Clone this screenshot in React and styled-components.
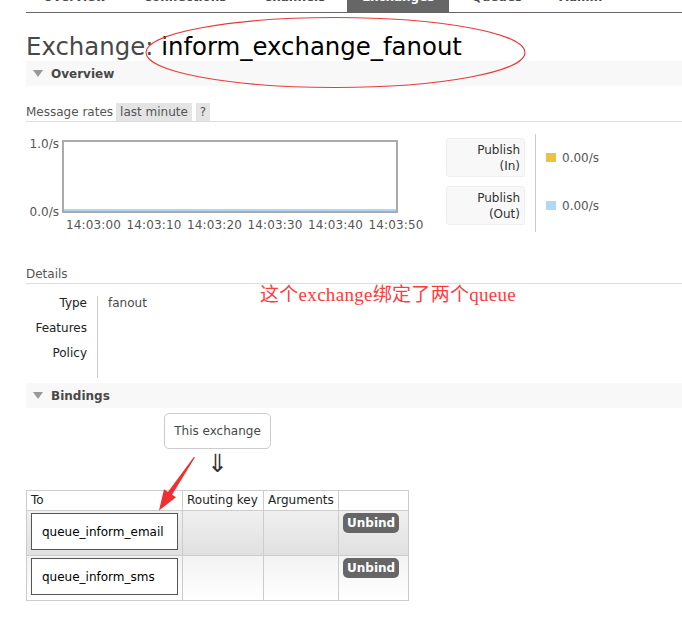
import React from "react";
import styled, { createGlobalStyle } from "styled-components";

const GlobalStyle = createGlobalStyle`
  html, body { margin: 0; padding: 0; background: #fff; }
  body {
    font-family: "DejaVu Sans", Verdana, sans-serif;
    font-size: 12px;
    color: #484848;
  }
  * { box-sizing: border-box; }
`;

const Page = styled.div`
  position: relative;
  width: 682px;
  height: 617px;
  overflow: hidden;
  padding-left: 26px;
`;

/* ---------- nav ---------- */
const NavClip = styled.div`
  height: 13px;
  border-bottom: 1px solid #666;
  overflow: hidden;
`;
const NavList = styled.ul`
  display: flex;
  gap: 7px;
  margin: -14px 0 0 2px;
  padding: 0;
  list-style: none;
`;
const Tab = styled.li`
  height: 26px;
  padding: 4px 15px 0;
  line-height: 14px;
  font-weight: bold;
  white-space: nowrap;
  color: ${(p) => (p.$active ? "#fff" : "#484848")};
  background: ${(p) => (p.$active ? "#666" : "transparent")};
`;

/* ---------- title ---------- */
const Title = styled.h1`
  margin: 20px 0 0;
  font-size: 24.4px;
  font-weight: normal;
  line-height: 28px;
  color: #484848;
  white-space: nowrap;
`;
const TitleName = styled.span`
  color: #000;
`;

/* ---------- section header ---------- */
const SectionHeader = styled.h2`
  margin: ${(p) => p.$mt || 0}px 0 0;
  height: 25px;
  display: flex;
  align-items: center;
  gap: 8px;
  padding-left: 7px;
  background: #f8f8f8;
  font-size: 12px;
  font-weight: bold;
  color: #484848;
`;
const Triangle = () => (
  <svg width="10" height="7" viewBox="0 0 10 7">
    <path d="M0 0 L10 0 L5 7 Z" fill="#999" />
  </svg>
);

/* ---------- message rates ---------- */
const RatesBar = styled.div`
  margin-top: 16px;
  height: 20px;
  padding-top: 1px;
  display: flex;
  align-items: flex-start;
  border-bottom: 1px solid #ddd;
  color: #555;
`;
const RatesLabel = styled.span`
  line-height: 18px;
  margin-right: 3px;
`;
const Pill = styled.span`
  height: 18px;
  line-height: 18px;
  padding: 0 4px;
  margin-right: 4px;
  background: #e4e4e4;
  color: #555;
`;

const ChartRow = styled.div`
  display: flex;
  margin-top: 12px;
`;
const ChartBlock = styled.div`
  width: 404px;
  padding-top: 6px;
`;
const PlotRow = styled.div`
  display: flex;
  align-items: flex-start;
`;
const YAxis = styled.div`
  width: 36px;
  height: 82px;
  margin-top: -3px;
  padding-right: 3px;
  display: flex;
  flex-direction: column;
  justify-content: space-between;
  align-items: flex-end;
  line-height: 14px;
  color: #555;
`;
const PlotBox = styled.div`
  width: 336px;
  height: 73px;
  border: 2px solid #aaa;
  display: flex;
  flex-direction: column;
  justify-content: flex-end;
`;
const PlotLine = styled.div`
  height: 2px;
  background: #afd8f8;
`;
const TimeAxis = styled.div`
  display: flex;
  margin-top: -1px;
  padding-left: 40px;
  line-height: 14px;
  color: #555;
`;
const TimeLabel = styled.span`
  width: 60.5px;
  flex: none;
  white-space: nowrap;
  letter-spacing: 0.15px;
`;

const Legend = styled.div`
  display: flex;
  margin-left: 16px;
`;
const LegendCol = styled.div`
  display: flex;
  flex-direction: column;
  gap: 9px;
  padding: 4px 10px 4px 0;
  border-right: 1px solid #ccc;
`;
const LegendBox = styled.div`
  width: 79px;
  height: 39px;
  padding-right: 4px;
  display: flex;
  flex-direction: column;
  justify-content: center;
  align-items: flex-end;
  line-height: 16px;
  background: #f8f8f8;
  border: 1px solid #eee;
  border-radius: 3px;
  color: #333;
`;
const ValueCol = styled.div`
  display: flex;
  flex-direction: column;
  gap: 9px;
  padding: 4px 0 4px 10px;
`;
const ValueItem = styled.div`
  height: 39px;
  display: flex;
  align-items: center;
  gap: 6px;
  color: #555;
`;
const Swatch = styled.span`
  width: 10px;
  height: 9px;
  background: ${(p) => p.$color};
`;

/* ---------- details ---------- */
const SubTitle = styled.div`
  margin-top: 35px;
  line-height: 14px;
  padding-bottom: 2px;
  border-bottom: 1px solid #ddd;
  color: #555;
`;
const DetailsTable = styled.div`
  display: flex;
  margin-top: 12px;
`;
const DetailLabels = styled.div`
  width: 72px;
  padding: 0 10px 18px 0;
  border-right: 1px solid #ccc;
  display: flex;
  flex-direction: column;
  gap: 11px;
  align-items: flex-end;
  line-height: 14px;
  color: #222;
`;
const DetailValues = styled.div`
  padding-left: 10px;
  line-height: 14px;
  color: #484848;
`;

/* ---------- bindings ---------- */
const Bindings = styled.div`
  display: inline-flex;
  flex-direction: column;
  align-items: center;
`;
const SourceBox = styled.div`
  margin-top: 5px;
  padding: 10px 9px;
  line-height: 14px;
  border: 1px solid #ccc;
  border-radius: 5px;
  color: #484848;
`;
const DownArrow = styled.div`
  margin: 2px 0 13px;
  height: 26px;
  font-size: 25px;
  line-height: 26px;
  color: #333;
`;
const Table = styled.table`
  border-collapse: collapse;
  width: 382px;
  table-layout: fixed;
`;
const Th = styled.th`
  border: 1px solid #ccc;
  padding: 0 4px;
  height: 20px;
  line-height: 19px;
  text-align: left;
  font-weight: normal;
  color: #222;
  white-space: nowrap;
  width: ${(p) => p.$w}px;
`;
const Tr = styled.tr`
  background: ${(p) =>
    p.$alt
      ? "linear-gradient(#f3f3f3, #ffffff)"
      : "linear-gradient(#f0f0f0, #e0e0e0)"};
`;
const Td = styled.td`
  border: 1px solid #ccc;
  padding: 2px 4px 5px;
  vertical-align: top;
`;
const QueueLink = styled.div`
  height: 37px;
  padding-left: 10px;
  display: flex;
  align-items: center;
  background: #fff;
  border: 1px solid #555;
  color: #000;
  white-space: nowrap;
`;
const UnbindButton = styled.button`
  height: 20px;
  padding: 0 4px;
  border: none;
  border-radius: 5px;
  background: #666;
  color: #fff;
  font-family: inherit;
  font-size: 12px;
  font-weight: bold;
  line-height: 20px;
`;

/* ---------- annotations ---------- */
const Overlay = styled.svg`
  position: absolute;
  left: 0;
  top: 0;
  pointer-events: none;
`;
const Note = styled.div`
  position: absolute;
  left: 260px;
  top: 285px;
  font-family: "Liberation Serif", "Noto Sans CJK SC", serif;
  font-size: 19px;
  line-height: 20px;
  letter-spacing: 0.3px;
  color: #ff3b3b;
  white-space: nowrap;
`;

const tabs = ["Overview", "Connections", "Channels", "Exchanges", "Queues", "Admin"];
const times = ["14:03:00", "14:03:10", "14:03:20", "14:03:30", "14:03:40", "14:03:50"];
const queues = ["queue_inform_email", "queue_inform_sms"];

export default function App() {
  return (
    <>
      <GlobalStyle />
      <Page>
        <NavClip>
          <NavList>
            {tabs.map((t) => (
              <Tab key={t} $active={t === "Exchanges"}>
                {t}
              </Tab>
            ))}
          </NavList>
        </NavClip>

        <Title>
          Exchange: <TitleName>inform_exchange_fanout</TitleName>
        </Title>

        <SectionHeader>
          <Triangle />
          Overview
        </SectionHeader>

        <RatesBar>
          <RatesLabel>Message rates</RatesLabel>
          <Pill>last minute</Pill>
          <Pill>?</Pill>
        </RatesBar>

        <ChartRow>
          <ChartBlock>
            <PlotRow>
              <YAxis>
                <span>1.0/s</span>
                <span>0.0/s</span>
              </YAxis>
              <PlotBox>
                <PlotLine />
              </PlotBox>
            </PlotRow>
            <TimeAxis>
              {times.map((t) => (
                <TimeLabel key={t}>{t}</TimeLabel>
              ))}
            </TimeAxis>
          </ChartBlock>
          <Legend>
            <LegendCol>
              <LegendBox>
                <span>Publish</span>
                <span>(In)</span>
              </LegendBox>
              <LegendBox>
                <span>Publish</span>
                <span>(Out)</span>
              </LegendBox>
            </LegendCol>
            <ValueCol>
              <ValueItem>
                <Swatch $color="#edc240" />
                0.00/s
              </ValueItem>
              <ValueItem>
                <Swatch $color="#afd8f8" />
                0.00/s
              </ValueItem>
            </ValueCol>
          </Legend>
        </ChartRow>

        <SubTitle>Details</SubTitle>
        <DetailsTable>
          <DetailLabels>
            <span>Type</span>
            <span>Features</span>
            <span>Policy</span>
          </DetailLabels>
          <DetailValues>fanout</DetailValues>
        </DetailsTable>

        <SectionHeader $mt={5}>
          <Triangle />
          Bindings
        </SectionHeader>

        <Bindings>
          <SourceBox>This exchange</SourceBox>
          <DownArrow>⇓</DownArrow>
          <Table>
            <thead>
              <tr>
                <Th $w={156}>To</Th>
                <Th $w={81}>Routing key</Th>
                <Th $w={75}>Arguments</Th>
                <Th $w={70}></Th>
              </tr>
            </thead>
            <tbody>
              {queues.map((q, i) => (
                <Tr key={q} $alt={i % 2 === 1}>
                  <Td>
                    <QueueLink>{q}</QueueLink>
                  </Td>
                  <Td />
                  <Td />
                  <Td>
                    <UnbindButton>Unbind</UnbindButton>
                  </Td>
                </Tr>
              ))}
            </tbody>
          </Table>
        </Bindings>

        <Note>这个exchange绑定了两个queue</Note>

        <Overlay width="682" height="617" viewBox="0 0 682 617">
          <ellipse cx="335.5" cy="52.5" rx="189.5" ry="35" fill="none" stroke="#e83a3a" strokeWidth="1.1" />
          <polygon
            points="194.9,457.4 172.1,494.7 176,497.3 159,510.5 164,489.3 167.9,491.9 194,456.8"
            fill="#f03030"
          />
        </Overlay>
      </Page>
    </>
  );
}
